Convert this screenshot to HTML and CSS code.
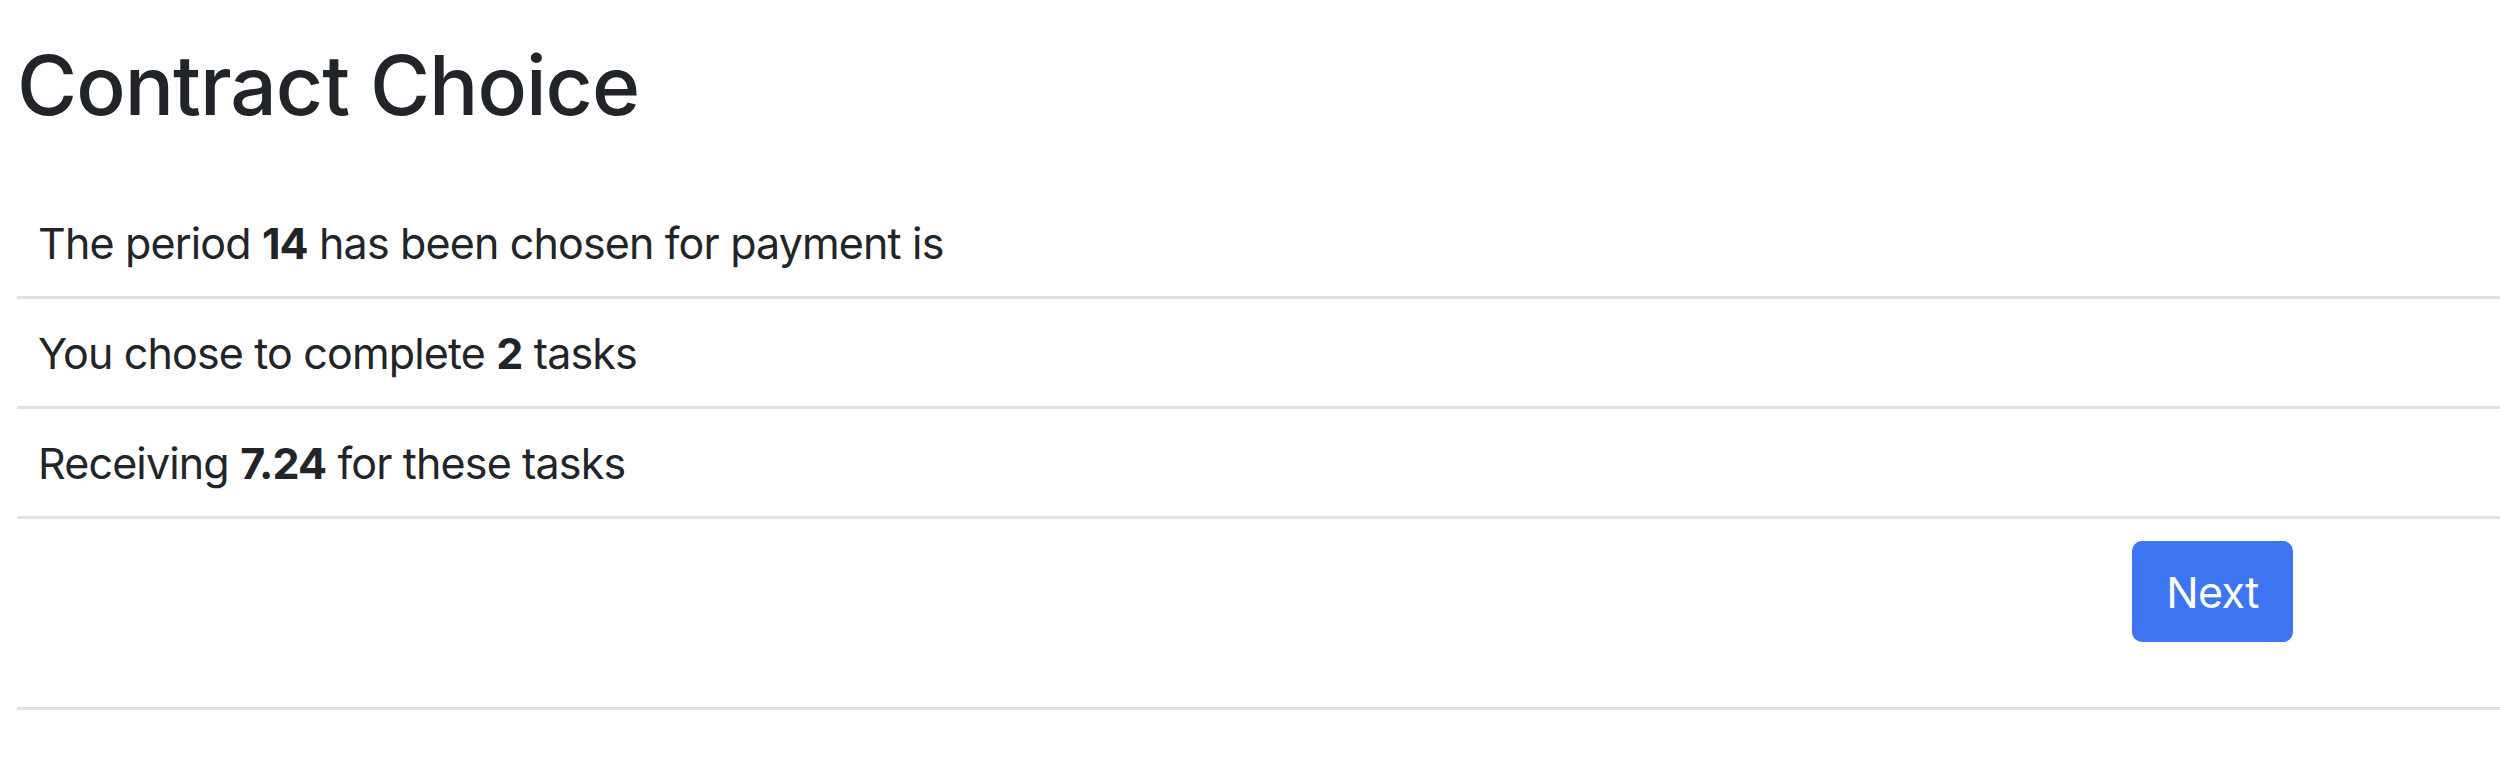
FILE: index.html
```html
<!DOCTYPE html>
<html lang="en">
<head>
<meta charset="utf-8">
<title>Contract Choice</title>
<link rel="stylesheet" href="styles.css">
</head>
<body>
<div class="page">
  <h1 class="title">Contract Choice</h1>
  <div class="table">
    <div class="row">The period <b>14</b> has been chosen for payment is</div>
    <div class="row">You chose to complete <b>2</b> tasks</div>
    <div class="row">Receiving <b>7.24</b> for these tasks</div>
    <div class="row row-actions">
      <button class="btn-primary" type="button">Next</button>
    </div>
  </div>
</div>
</body>
</html>
```

FILE: styles.css
```css
html, body {
  margin: 0;
  padding: 0;
  background: #ffffff;
}

body {
  font-family: Inter, "Liberation Sans", Arial, sans-serif;
  color: #212529;
}

.page {
  padding-left: 17px;
}

.title {
  margin: 0 0 53px 0;
  padding-top: 35px;
  font-size: 82px;
  line-height: 101px;
  font-weight: 500;
  letter-spacing: -1px;
}

.table {
  display: flex;
  flex-direction: column;
}

.row {
  padding: 22px 21px 21px 21px;
  font-size: 43px;
  line-height: 64px;
  border-bottom: 3px solid #dee2e6;
  letter-spacing: -0.85px;
}

.row b {
  font-weight: 700;
}

.row-actions {
  display: flex;
  justify-content: flex-end;
  padding: 22px 207px 65px 21px;
}

.btn-primary {
  font-family: inherit;
  font-size: 43px;
  line-height: 64px;
  height: 101px;
  width: 161px;
  padding: 0;
  color: #ffffff;
  background: #3d74f2;
  border: none;
  border-radius: 10px;
  letter-spacing: -0.6px;
}
```
